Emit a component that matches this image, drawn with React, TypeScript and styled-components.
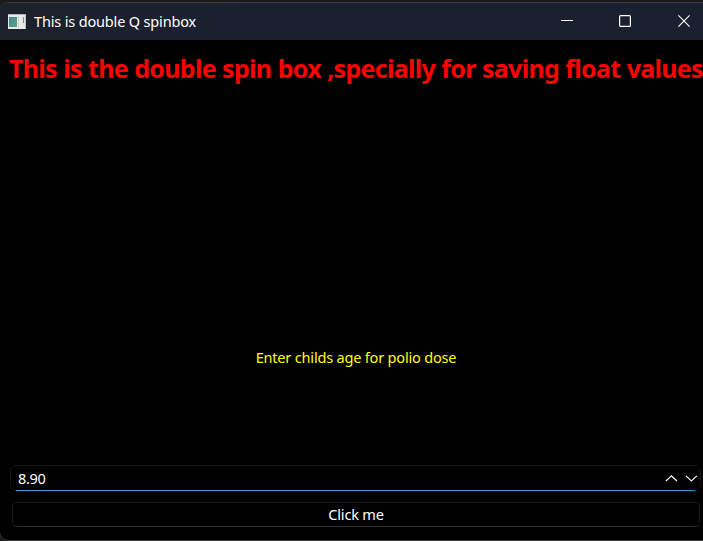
import React, { useState } from 'react';
import styled, { createGlobalStyle } from 'styled-components';

const GlobalStyle = createGlobalStyle`
  * { box-sizing: border-box; }
  html, body { margin: 0; background: #1a1a1a; overflow: hidden; }
  body { font-family: "Noto Sans", "Open Sans", sans-serif; }
`;

const Desktop = styled.div`
  width: 703px;
  height: 541px;
  padding-top: 2px;
  overflow: hidden;
  background: #1a1a1a;
`;

const Window = styled.div`
  display: flex;
  flex-direction: column;
  width: 720px;
  height: 539px;
  margin-left: -1px;
  border: 1px solid #3d3d3d;
  border-radius: 9px;
  overflow: hidden;
  background: #000;
`;

const TitleBar = styled.header`
  display: flex;
  align-items: center;
  flex: none;
  height: 37px;
  padding-left: 8px;
  background: linear-gradient(90deg, #1d212b, #1b2030 35%);
`;

const Title = styled.span`
  width: 527px;
  margin: 0 0 1px 8px;
  color: #fff;
  font-size: 14.5px;
  line-height: 20px;
  letter-spacing: -0.16px;
  white-space: nowrap;
`;

const CaptionButton = styled.button<{ $width: number }>`
  display: flex;
  width: ${(p) => p.$width}px;
  height: 37px;
  padding: 12px 0 0;
  border: 0;
  background: transparent;
  color: #fff;
`;

const Body = styled.main`
  display: flex;
  flex-direction: column;
  flex: 1;
  width: 703px;
`;

const Heading = styled.h1`
  margin: 10px 0 0 9px;
  color: #f00;
  font-size: 25px;
  font-weight: 700;
  line-height: 36px;
  letter-spacing: -0.7px;
  word-spacing: 0.45px;
  white-space: nowrap;
`;

const Prompt = styled.label`
  margin: 261px 0 0 9px;
  color: #ff0;
  font-size: 14.5px;
  line-height: 20px;
  letter-spacing: -0.18px;
  text-align: center;
`;

const SpinBox = styled.div`
  display: flex;
  position: relative;
  align-items: center;
  width: 691px;
  height: 26px;
  margin: 98px 0 0 10px;
  padding-left: 7px;
  border: 1px solid #151515;
  border-radius: 6px;

  &::after {
    content: "";
    position: absolute;
    left: 5px;
    right: 5px;
    bottom: -1px;
    height: 1px;
    background: #4197c9;
  }
`;

const Value = styled.input`
  flex: 1;
  min-width: 0;
  padding: 0;
  border: 0;
  outline: 0;
  background: transparent;
  color: #fff;
  font: 14.5px/20px "Noto Sans", sans-serif;
  letter-spacing: -0.35px;
`;

const StepButton = styled.button`
  display: flex;
  width: 20px;
  height: 20px;
  padding: 7px 0 0 5px;
  border: 0;
  background: transparent;
  color: #fff;
`;

const PushButton = styled.button`
  width: 688px;
  height: 25px;
  margin: 11px 0 0 12px;
  padding: 0;
  border: 1px solid #181818;
  border-bottom-color: #2b2b2b;
  border-radius: 5px;
  background: #000;
  color: #fff;
  font: 14.5px/21px "Noto Sans", sans-serif;
  letter-spacing: -0.18px;
`;

const AppIcon = () => (
  <svg width="18" height="15" viewBox="0 0 18 15" shapeRendering="crispEdges">
    <defs>
      <linearGradient id="pane" x1="0" y1="0" x2="1" y2="1">
        <stop offset="0" stopColor="#4682a0" />
        <stop offset="1" stopColor="#58ab74" />
      </linearGradient>
    </defs>
    <rect width="18" height="15" fill="#e9e9e9" />
    <rect width="18" height="1" fill="#b1b5bb" />
    <rect x="1" y="3" width="8" height="10" fill="url(#pane)" />
    <rect x="10" y="2" width="1" height="12" fill="#d0d4d4" />
    <rect x="15" y="3" width="1" height="6" fill="#5a9c8a" />
    <rect x="17" y="1" width="1" height="14" fill="#b9bcbc" />
  </svg>
);

const MinimizeIcon = () => (
  <svg width="12" height="13">
    <path d="M0 5.5H12" stroke="currentColor" />
  </svg>
);

const MaximizeIcon = () => (
  <svg width="12" height="12">
    <rect x="0.6" y="0.6" width="10.8" height="10.8" rx="1" fill="none" stroke="currentColor" strokeWidth="1.2" />
  </svg>
);

const CloseIcon = () => (
  <svg width="12" height="12">
    <path d="M.4 .4 11.6 11.6M11.6 .4 .4 11.6" stroke="currentColor" strokeWidth="1.1" />
  </svg>
);

const ChevronSvg = styled.svg`
  flex: none;
  width: 13px;
  height: 7px;
`;

const Chevron = ({ d }: { d: string }) => (
  <ChevronSvg>
    <path d={d} fill="none" stroke="currentColor" strokeWidth="1.15" />
  </ChevronSvg>
);

export default function App() {
  const [value, setValue] = useState('8.90');
  const step = (by: number) => setValue(((parseFloat(value) || 0) + by).toFixed(2));

  return (
    <>
      <GlobalStyle />
      <Desktop>
        <Window>
          <TitleBar>
            <AppIcon />
            <Title>This is double Q spinbox</Title>
            <CaptionButton $width={58} aria-label="Minimize"><MinimizeIcon /></CaptionButton>
            <CaptionButton $width={59} aria-label="Maximize"><MaximizeIcon /></CaptionButton>
            <CaptionButton $width={40} aria-label="Close"><CloseIcon /></CaptionButton>
          </TitleBar>
          <Body>
            <Heading>This is the double spin box ,specially for saving float values</Heading>
            <Prompt htmlFor="age">Enter childs age for polio dose</Prompt>
            <SpinBox>
              <Value id="age" value={value} onChange={(e) => setValue(e.target.value)} />
              <StepButton aria-label="Increase" onClick={() => step(1)}><Chevron d="M.9 6 6.4 .8 11.9 6" /></StepButton>
              <StepButton aria-label="Decrease" onClick={() => step(-1)}><Chevron d="M.9 .8 6.4 6 11.9 .8" /></StepButton>
            </SpinBox>
            <PushButton>Click me</PushButton>
          </Body>
        </Window>
      </Desktop>
    </>
  );
}
